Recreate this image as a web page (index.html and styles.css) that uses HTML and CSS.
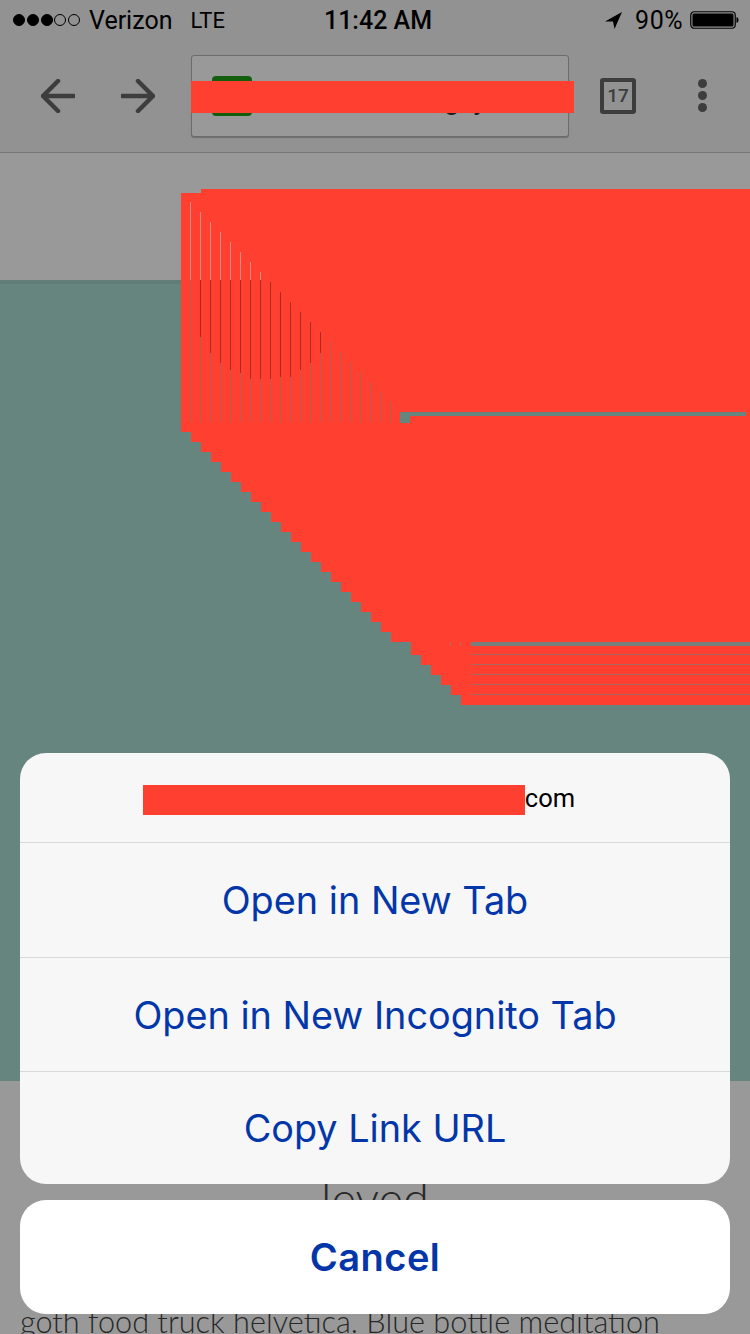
FILE: index.html
```html
<!DOCTYPE html>
<html lang="en">
<head>
<meta charset="utf-8">
<title>Link actions</title>
<link rel="stylesheet" href="styles.css">
</head>
<body>
<div class="screen">
  <header class="chrome">
    <div class="status">
      <div class="status-left">
        <span class="signal"><i class="dot on"></i><i class="dot on"></i><i class="dot on"></i><i class="dot"></i><i class="dot"></i></span>
        <span class="carrier">Verizon</span>
        <span class="network">LTE</span>
      </div>
      <div class="clock">11:42 AM</div>
      <div class="status-right">
        <svg class="loc" width="17" height="17" viewBox="0 0 17 17"><path d="M0 9.5 17 0 9.5 17 8 9.5Z"/></svg>
        <span class="pct">90%</span>
        <svg class="battery" width="49" height="18" viewBox="0 0 49 18"><rect x=".75" y=".75" width="44.5" height="16.5" rx="3.5" fill="none" stroke="#000" stroke-width="1.2"/><rect x="2.5" y="2.5" width="41" height="13" rx="1.5"/><path d="M46.5 6v6c1.3-.3 2-1.5 2-3s-.7-2.700-2-3Z"/></svg>
      </div>
    </div>
    <div class="toolbar">
      <svg class="nav back" width="34" height="34" viewBox="0 0 34 34"><path d="M33 17H2M17 2 2 17l15 15"/></svg>
      <svg class="nav forward" width="34" height="34" viewBox="0 0 34 34"><path d="M1 17h31M17 2l15 15-15 15"/></svg>
      <div class="omnibox">
        <span class="favicon"></span>
        <span class="url">g&nbsp;&nbsp;y</span>
      </div>
      <div class="tabs">17</div>
      <div class="menu"><i></i><i></i><i></i></div>
    </div>
  </header>

  <main class="page">
    <div class="band"></div>
    <div class="hero"></div>
    <article class="copy">
      <h1 class="heading">leved</h1>
      <p class="para">goth food truck helvetica. Blue bottle meditation</p>
    </article>
  </main>

  <div class="scrim"></div>

  <svg class="redaction" width="750" height="1334" viewBox="0 0 750 1334">
    <path fill="#ff3f30" d="M181 193H201V189H750V705H461V695H451V685H441V675H431V665H421V655H411V642H391V632H381V622H371V612H361V602H351V592H341V582H331V572H321V562H311V552H301V542H291V532H281V522H271V512H261V502H251V492H241V482H231V472H221V462H211V452H201V442H191V432H181Z"/>
    <path fill="none" stroke="#c9a79f" stroke-opacity=".75" d="M190.500 202V280M200.500 212V280M210.500 222V280M220.500 232V280M230.500 242V280M240.500 252V280M250.500 262V280M260.500 272V280"/>
    <path fill="none" stroke="#a4665c" stroke-opacity=".8" d="M190.500 280V422M200.500 337V422M210.500 353V422M220.500 363V422M230.500 370V422M240.500 373V422M250.500 379V422M260.500 379V422M270.500 379V422M280.500 377V422M290.500 377V422M300.500 370V422M310.500 363V422M320.500 353V422M330.500 342V422M340.500 352V422M350.500 362V422M360.500 372V422M370.500 382V422M380.500 392V422M390.500 402V422"/>
    <path fill="none" stroke="#a92c22" d="M200.500 280V337M210.500 280V353M220.500 280V363M230.500 280V370M240.500 280V373M250.500 280V379M260.500 280V379M270.500 282V379M280.500 292V377M290.500 302V377M300.500 312V370M310.500 322V363M320.500 332V353"/>
    <path fill="#66857f" d="M400 412H746V416H410V423H400Z"/>
    <path fill="#73807b" d="M471 642H750V646H471Z"/>
    <rect x="471" y="654" width="279" height="1" fill="#a8685d"/>
    <rect x="471" y="664" width="279" height="1" fill="#a8685d"/>
    <rect x="471" y="674" width="279" height="1" fill="#a8685d"/>
    <rect x="471" y="684" width="279" height="1" fill="#a8685d"/>
    <rect x="471" y="694" width="279" height="1" fill="#a8685d"/>
    <path fill="none" stroke="#b96a5d" d="M450.500 642v4M460.500 642v4"/>
  </svg>

  <div class="url-redaction"></div>

  <section class="sheet">
    <div class="group">
      <div class="title"><span class="title-redaction"></span>com</div>
      <div class="action">Open in New Tab</div>
      <div class="action">Open in New Incognito Tab</div>
      <div class="action">Copy Link URL</div>
    </div>
    <div class="cancel">Cancel</div>
  </section>
</div>
</body>
</html>
```

FILE: styles.css
```css
* { box-sizing: border-box; }
html, body { margin: 0; padding: 0; background: #fff; }

.screen {
  position: relative;
  width: 750px;
  height: 1334px;
  overflow: hidden;
  font-family: Roboto, "Liberation Sans", sans-serif;
}

/* browser chrome */
.chrome {
  height: 153px;
  background: #f4f4f4;
  border-bottom: 1px solid #c4c4c4;
  display: flex;
  flex-direction: column;
}
.status {
  height: 40px;
  padding: 0 11px 0 13px;
  display: grid;
  grid-template-columns: 1fr auto 1fr;
  align-items: center;
  font-size: 25px;
  color: #000;
}
.status-left, .status-right { display: flex; align-items: center; }
.status-right { justify-content: flex-end; }
.signal { display: flex; gap: 1.75px; margin-right: 9px; }
.dot {
  width: 12px;
  height: 12px;
  border-radius: 50%;
  border: 1px solid #000;
}
.dot.on { background: #000; }
.network { margin-left: 18px; font-size: 22px; }
.clock { font-weight: 500; padding-left: 4px; }
.loc { margin-right: 13px; }
.pct { margin-right: 7px; letter-spacing: .5px; }
.battery { display: block; }

.toolbar {
  flex: 1;
  display: flex;
  align-items: center;
  padding: 0 0 0 41px;
  margin-top: -1px;
}
.nav path {
  fill: none;
  stroke: #666;
  stroke-width: 4.5;
  stroke-linecap: round;
  stroke-linejoin: round;
}
.forward { margin-left: 46px; }
.omnibox {
  width: 378px;
  height: 82px;
  margin-top: 1px;
  margin-left: 36px;
  display: flex;
  align-items: center;
  background: #fff;
  border: 1px solid #b5b5b5;
  border-radius: 3px;
  box-shadow: 0 1px 1px rgba(0, 0, 0, .25);
}
.favicon {
  width: 40px;
  height: 40px;
  margin-left: 20px;
  border-radius: 4px;
  background: #1e9d16;
  flex: none;
}
.url {
  margin-left: 192px;
  margin-top: 8px;
  font-size: 28px;
  line-height: 40px;
  color: #333;
}
.tabs {
  width: 36px;
  height: 36px;
  margin-left: 31px;
  border: 4px solid #666;
  border-radius: 3px;
  display: flex;
  align-items: center;
  justify-content: center;
  font-size: 19px;
  font-weight: 500;
  color: #666;
}
.menu {
  margin-left: 62px;
  display: flex;
  flex-direction: column;
  gap: 3px;
}
.menu i {
  width: 9px;
  height: 9px;
  border-radius: 50%;
  background: #666;
}

/* page under the sheet */
.page { background: #fff; }
.band { height: 127px; }
.hero {
  height: 801px;
  background: #aaded4;
  border-top: 4px solid #a0d0c8;
}
.copy {
  padding: 92px 20px 0;
  font-family: Lato, Roboto, sans-serif;
  font-weight: 300;
  color: #444;
  font-size: 30.700px;
}
.heading {
  margin: 0;
  font-size: 47px;
  font-weight: 300;
  line-height: 50px;
  text-align: center;
}
.para {
  margin: 79px 0 0;
  line-height: 40px;
  white-space: nowrap;
}

/* overlays */
.scrim {
  position: absolute;
  inset: 0;
  background: rgba(0, 0, 0, .4);
}
.redaction {
  position: absolute;
  inset: 0;
}
.url-redaction {
  position: absolute;
  left: 191px;
  top: 81px;
  width: 383px;
  height: 32px;
  background: #ff3f30;
}

/* action sheet */
.sheet {
  position: absolute;
  left: 20px;
  right: 20px;
  top: 753px;
  display: flex;
  flex-direction: column;
  gap: 16px;
  font-family: Inter, Roboto, sans-serif;
}
.group {
  border-radius: 26px;
  overflow: hidden;
  background: #f7f7f8;
}
.title {
  height: 89px;
  padding-right: 32px;
  display: flex;
  align-items: center;
  justify-content: center;
  font-family: Roboto, sans-serif;
  font-size: 25.500px;
  color: #000;
}
.title-redaction {
  width: 382px;
  height: 30px;
  margin-top: 4px;
  background: #ff3f30;
}
.action {
  height: 114px;
  border-top: 1px solid #d8d8d9;
  display: flex;
  align-items: center;
  justify-content: center;
  font-size: 37.800px;
  color: #0336a8;
}
.action:nth-child(2) { height: 115px; }
.action:last-child { height: 113px; }
.cancel {
  height: 114px;
  border-radius: 26px;
  background: #fff;
  display: flex;
  align-items: center;
  justify-content: center;
  font-size: 38px;
  font-weight: 600;
  letter-spacing: .5px;
  color: #0336a8;
}
```
